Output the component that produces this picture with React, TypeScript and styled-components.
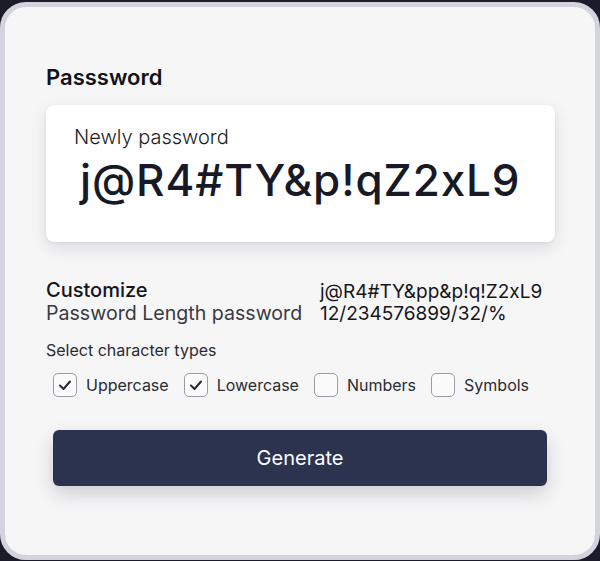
import styled, { createGlobalStyle } from "styled-components";

const GlobalStyle = createGlobalStyle`
    html, body {
        margin: 0;
        padding: 0;
        background: #1b1b29;
        font-family: Inter, "Noto Sans", "Liberation Sans", sans-serif;
    }
`;

const Card = styled.div`
    box-sizing: border-box;
    margin-top: 2px;
    height: 558px;
    width: 600px;
    border: 5px solid #d3d3dd;
    border-radius: 26px;
    background: #f6f6f7;
    padding: 57px 40px 0 41px;
    display: flex;
    flex-direction: column;
`;

const Title = styled.h2`
    margin: 0;
    font-size: 22px;
    font-weight: 600;
    color: #121218;
    line-height: 26px;
`;

const OutputBox = styled.div`
    margin-top: 15px;
    height: 137px;
    box-sizing: border-box;
    background: #ffffff;
    border-radius: 8px;
    box-shadow: 0 6px 16px rgba(30, 30, 50, 0.12), 0 1px 3px rgba(30, 30, 50, 0.06);
    padding: 20px 28px 0;

    .label {
        font-size: 20px;
        font-weight: 300;
        color: #1d1d25;
        line-height: 24px;
    }

    .value {
        margin-top: 5px;
        padding-left: 6px;
        font-size: 44px;
        font-weight: 500;
        color: #171a26;
        letter-spacing: 0.9px;
        line-height: 52px;
    }
`;

const CustomizeRow = styled.div`
    margin-top: 37px;
    display: grid;
    grid-template-columns: 274px 1fr;

    .heading {
        font-size: 20px;
        font-weight: 500;
        color: #15151c;
        line-height: 22px;
    }

    .sub {
        font-size: 19.6px;
        font-weight: 400;
        color: #3a3a42;
        line-height: 24px;
    }

    .right {
        font-size: 19px;
        font-weight: 400;
        color: #15151c;
        line-height: 22px;
        padding-top: 2px;
    }
`;

const SectionLabel = styled.div`
    margin-top: 15px;
    font-size: 16px;
    color: #2a2a32;
    line-height: 20px;
`;

const Options = styled.div`
    margin-top: 13px;
    display: flex;
    gap: 14px;
    padding-left: 7px;
`;

const Option = styled.label`
    display: flex;
    align-items: center;
    gap: 9px;
    font-size: 16px;
    color: #2a2a32;
    margin-right: 1px;
`;

const Box = styled.span`
    box-sizing: border-box;
    width: 24px;
    height: 24px;
    border: 1.5px solid #9c9ca6;
    border-radius: 5px;
    display: flex;
    align-items: center;
    justify-content: center;
    background: #fbfbfc;
`;

const GenerateButton = styled.button`
    margin: 33px 8px 0 7px;
    height: 56px;
    border: none;
    border-radius: 6px;
    background: #2b334f;
    color: #ffffff;
    font-family: inherit;
    font-size: 20px;
    font-weight: 400;
    box-shadow: 0 8px 18px rgba(30, 30, 50, 0.18);
`;

const Check = () => (
    <svg width="14" height="12" viewBox="0 0 14 12">
        <polyline
            points="2,6.5 5.5,10 12,2.5"
            fill="none"
            stroke="#2a2a34"
            strokeWidth="2"
            strokeLinecap="round"
            strokeLinejoin="round"
        />
    </svg>
);

const options = [
    { name: "Uppercase", checked: true },
    { name: "Lowercase", checked: true },
    { name: "Numbers", checked: false },
    { name: "Symbols", checked: false },
];

export default function App() {
    return (
        <>
            <GlobalStyle />
            <Card>
                <Title>Passsword</Title>
                <OutputBox>
                    <div className="label">Newly password</div>
                    <div className="value">j@R4#TY&amp;p!qZ2xL9</div>
                </OutputBox>
                <CustomizeRow>
                    <div>
                        <div className="heading">Customize</div>
                        <div className="sub">Password Length password</div>
                    </div>
                    <div className="right">
                        <div>j@R4#TY&amp;pp&amp;p!q!Z2xL9</div>
                        <div>12/234576899/32/%</div>
                    </div>
                </CustomizeRow>
                <SectionLabel>Select character types</SectionLabel>
                <Options>
                    {options.map((o) => (
                        <Option key={o.name}>
                            <Box>{o.checked && <Check />}</Box>
                            {o.name}
                        </Option>
                    ))}
                </Options>
                <GenerateButton>Generate</GenerateButton>
            </Card>
        </>
    );
}
